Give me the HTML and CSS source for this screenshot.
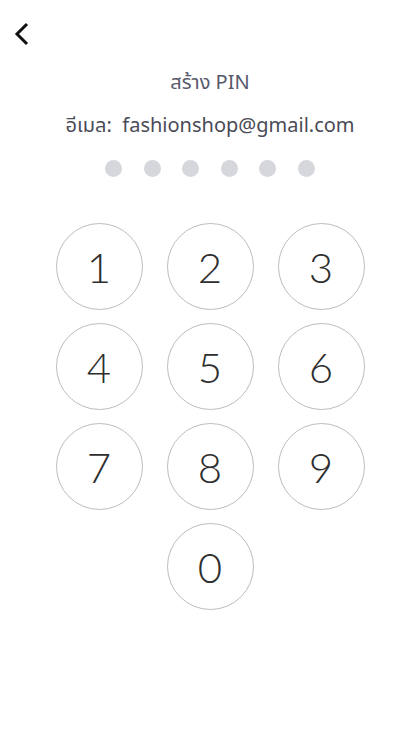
FILE: index.html
```html
<!DOCTYPE html>
<html>
<head>
<meta charset="utf-8">
<meta name="viewport" content="width=device-width, initial-scale=1.0">
<title>สร้าง PIN</title>
<link rel="stylesheet" href="styles.css">
</head>
<body>
<div class="top">
  <button class="back" aria-label="back">
    <svg width="16" height="24" viewBox="0 0 16 24"><path d="M13 2 L3 12 L13 22" fill="none" stroke="#111" stroke-width="3"/></svg>
  </button>
</div>
<h1 class="title">สร้าง PIN</h1>
<p class="email">อีเมล:&nbsp; fashionshop@gmail.com</p>
<div class="dots">
  <span></span><span></span><span></span><span></span><span></span><span></span>
</div>
<div class="pad">
  <button class="key">1</button>
  <button class="key">2</button>
  <button class="key">3</button>
  <button class="key">4</button>
  <button class="key">5</button>
  <button class="key">6</button>
  <button class="key">7</button>
  <button class="key">8</button>
  <button class="key">9</button>
  <button class="key zero">0</button>
</div>
</body>
</html>
```

FILE: styles.css
```css
body {
  margin: 0;
  background: #fff;
  font-family: "Noto Sans", "Noto Sans Thai", "DejaVu Sans", sans-serif;
  color: #50525f;
}

.top {
  height: 68px;
  padding: 22px 0 0 14px;
  box-sizing: border-box;
}

.back {
  background: none;
  border: 0;
  padding: 0;
  display: block;
}

.title {
  margin: 0;
  font-size: 20px;
  font-weight: normal;
  text-align: center;
  line-height: 28px;
  color: #585a6b;
}

.email {
  margin: 15px 0 0;
  font-size: 20px;
  text-align: center;
  line-height: 28px;
  color: #4a4b56;
}

.dots {
  display: flex;
  justify-content: center;
  gap: 21.5px;
  margin-top: 21px;
}

.dots span {
  width: 17px;
  height: 17px;
  border-radius: 50%;
  background: #d6d7dc;
}

.pad {
  display: grid;
  grid-template-columns: repeat(3, 87px);
  column-gap: 24px;
  row-gap: 13px;
  justify-content: center;
  margin-top: 46px;
}

.key {
  width: 87px;
  height: 87px;
  border-radius: 50%;
  border: 1px solid #bdbdbd;
  background: #fff;
  font-family: "Lato", sans-serif;
  font-weight: 300;
  font-size: 42px;
  color: #2e2e2e;
  padding: 0;
}

.zero {
  grid-column: 2;
}
```
